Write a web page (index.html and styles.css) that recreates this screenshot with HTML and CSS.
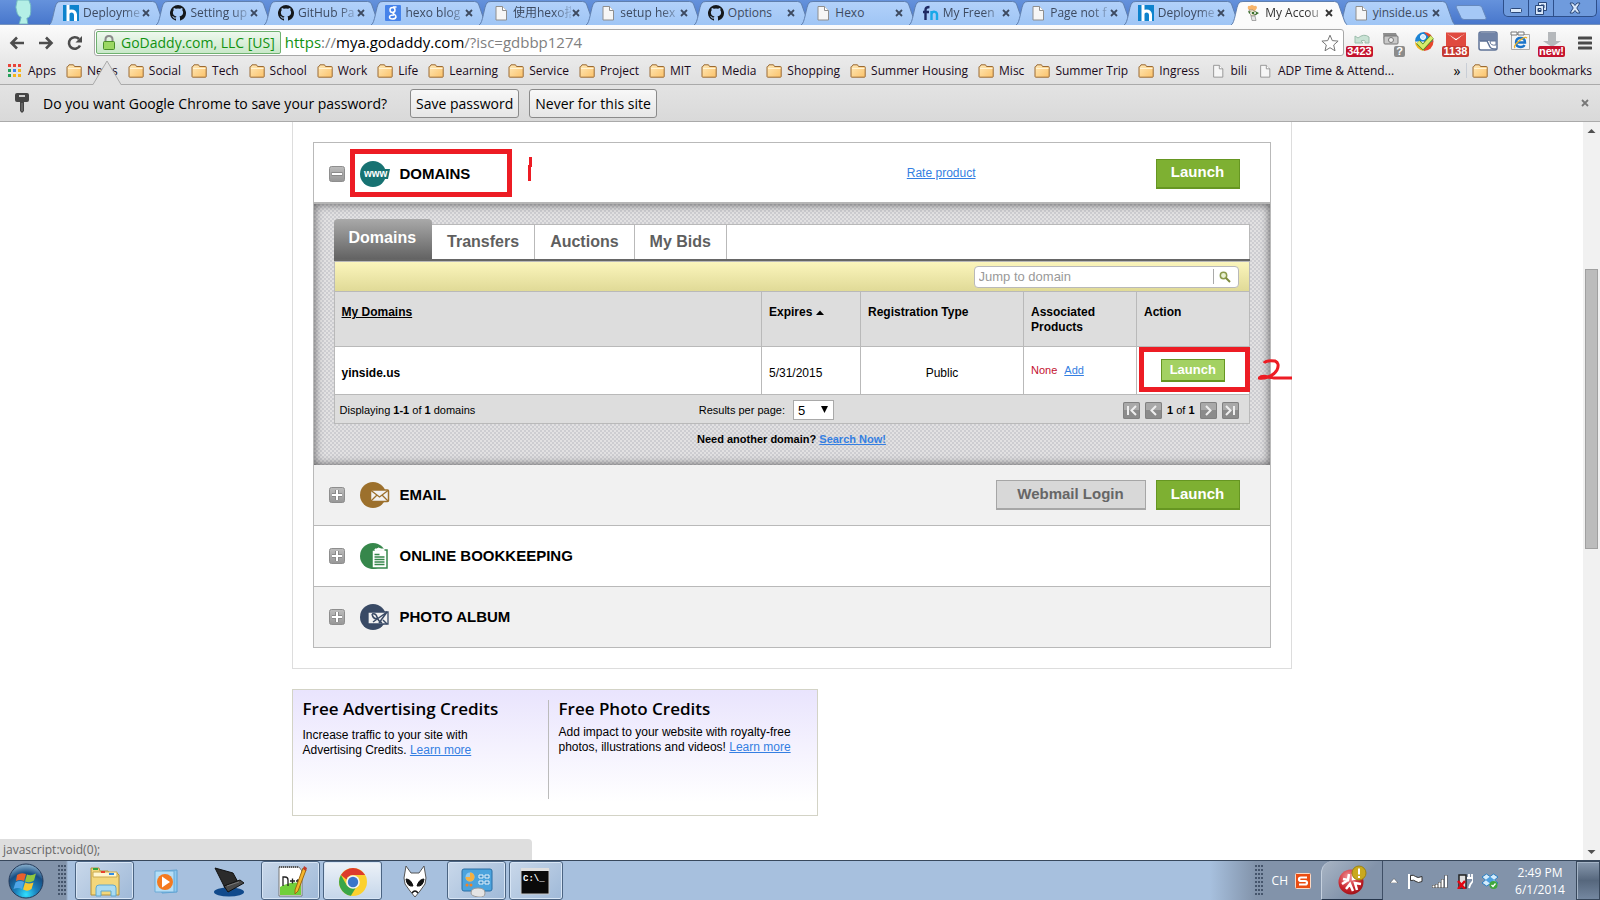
FILE: index.html
```html
<!DOCTYPE html>
<html lang="en">
<head>
<meta charset="utf-8">
<title>My Account</title>
<link rel="stylesheet" href="styles.css">
</head>
<body>
<svg class="defs" aria-hidden="true">
  <defs>
    <linearGradient id="gTab" x1="0" y1="0" x2="0" y2="1"><stop offset="0" stop-color="#b2d1fa"/><stop offset="1" stop-color="#9fc5f5"/></linearGradient>
    <linearGradient id="gFolder" x1="0" y1="0" x2="1" y2="1"><stop offset="0" stop-color="#ffe9b8"/><stop offset="1" stop-color="#fbc26a"/></linearGradient>
    <linearGradient id="gGrey" x1="0" y1="0" x2="0" y2="1"><stop offset="0" stop-color="#bdbdbd"/><stop offset="1" stop-color="#979797"/></linearGradient>
    <radialGradient id="gOrb" cx=".5" cy=".9" r=".9"><stop offset="0" stop-color="#2fe0ff"/><stop offset=".35" stop-color="#1c82bd"/><stop offset=".7" stop-color="#174e83"/><stop offset="1" stop-color="#8fb6d2"/></radialGradient>
    <radialGradient id="gRed" cx=".4" cy=".3" r=".8"><stop offset="0" stop-color="#f3959a"/><stop offset=".6" stop-color="#c9232b"/><stop offset="1" stop-color="#8f0d14"/></radialGradient>
  </defs>
  <symbol id="tab" viewBox="0 0 117 25" preserveAspectRatio="none"><path d="M0 25C4 24 5 6 8 3Q9 1.500 12 1.500H104Q107 1.500 108 4L114 21Q115 24 117 25" stroke="#5f7fae" vector-effect="non-scaling-stroke"/></symbol>
  <symbol id="close" viewBox="0 0 8 8"><path d="M1 1l6 6M7 1l-6 6" stroke="currentColor" stroke-width="1.800" fill="none"/></symbol>
  <symbol id="fav-h" viewBox="0 0 16 16"><path fill="#0e83cd" d="M0 0h16v16H0z"/><path d="M5 0v16M5 16V9q0-3 3.500-3T12.500 9.500V16" fill="none" stroke="#fff" stroke-width="3"/></symbol>
  <symbol id="fav-git" viewBox="0 0 16 16"><path fill="#15181b" d="M8 0a8 8 0 0 0-2.500 15.600c.4 0 .5-.2.500-.4v-1.600c-2.200.5-2.700-1-2.700-1-.4-.9-.9-1.200-.9-1.200-.7-.5.100-.5.100-.5.800.1 1.200.8 1.200.8.700 1.200 1.900.9 2.300.7.100-.5.300-.9.500-1.100-1.800-.2-3.600-.9-3.600-4 0-.8.300-1.500.8-2.100-.1-.3-.4-1.100.1-2.200 0 0 .7-.2 2.200.8a7.600 7.600 0 0 1 4 0c1.500-1 2.200-.8 2.200-.8.500 1.100.2 1.900.1 2.200.5.600.8 1.300.8 2.100 0 3.100-1.900 3.800-3.700 4 .3.300.6.800.6 1.600v2.300c0 .2.100.5.500.4A8 8 0 0 0 8 0z"/></symbol>
  <symbol id="fav-g" viewBox="0 0 16 16"><rect width="16" height="16" rx="1" fill="#4683ea"/><g fill="none" stroke="#fff" stroke-width="1.500"><ellipse cx="7.500" cy="5" rx="2.500" ry="2.500"/><path d="M11.500 2H8M9 7q-2 1 0 2.200T11 12q-.5 2-3.500 2t-3-2q0-2 4.500-2"/></g></symbol>
  <symbol id="fav-page" viewBox="0 0 16 16"><path d="M3 1.500h6.500L13.500 5.500V15H3z" fill="#f6f6f6" stroke="#8e8e8e"/><path d="M9.500 1.500v4h4" fill="#fff" stroke="#8e8e8e"/></symbol>
  <symbol id="fav-fn" viewBox="0 0 16 16"><path d="M2.500 15V5q0-3 4-3M0 7h6" stroke="#1f2a63" stroke-width="2.400" fill="none"/><path d="M8.500 15V6M8.500 9q1-3 3.500-2.200 2 .5 2 3V15" stroke="#18a8e8" stroke-width="2.400" fill="none"/></symbol>
  <symbol id="fav-gd" viewBox="0 0 16 16"><path d="M3 4Q2 0 5 1q2-2 4 0 3-1 3 2l-2 3H5z" fill="#f7b46a"/><path d="M4 5q4-1 7 2l-1 4H6z" fill="#f7ead0" stroke="#777" stroke-width=".6"/><path d="M3 6l4 1 4-.5 3 1.500-3 2-4-1-3-.5z" fill="#3d6e2f"/><circle cx="6" cy="8" r="1" fill="#fff"/><circle cx="10" cy="8" r="1" fill="#fff"/><path d="M6 11l4 0 1 4.500H7z" fill="#e6e6e6" stroke="#888" stroke-width=".7"/></symbol>
  <symbol id="folder" viewBox="0 0 16 14"><path d="M1 12.500V3q0-.5.500-.5H2L3 .8h4.500l1 1.700H14.500q.7 0 .7.700v9.300q0 .7-.7.700H1.700q-.7 0-.7-.7z" fill="url(#gFolder)" stroke="#9a6a35"/><path d="M2 4.500h12.500" stroke="#fff3d4"/></symbol>
  <symbol id="plus" viewBox="0 0 16 16"><rect x=".5" y=".5" width="15" height="15" rx="2" fill="url(#gGrey)" stroke="#8e8e8e"/><path d="M8 3v10M3 8h10" stroke="#8a8a8a" stroke-width="4"/><path d="M8 3v10M3 8h10" stroke="#fff" stroke-width="2"/></symbol>
</svg>

<header class="chrome">
  <div class="tabstrip">
    <svg class="avatar" viewBox="0 0 20 25"><path d="M3 0Q0 8 3 14q1 3 4 4l-2 7h9l-1-6q4-1 4-7 1-7-2-12z" fill="#b4efe6" stroke="#6fb7c0"/></svg>
    <nav class="tabs">
      <a class="tab" href="#"><svg class="shape"><use href="#tab"/></svg><svg class="fav"><use href="#fav-h"/></svg><span class="fade">Deployme</span><svg class="x"><use href="#close"/></svg></a>
      <a class="tab" href="#"><svg class="shape"><use href="#tab"/></svg><svg class="fav"><use href="#fav-git"/></svg><span class="fade">Setting up</span><svg class="x"><use href="#close"/></svg></a>
      <a class="tab" href="#"><svg class="shape"><use href="#tab"/></svg><svg class="fav"><use href="#fav-git"/></svg><span class="fade">GitHub Pa</span><svg class="x"><use href="#close"/></svg></a>
      <a class="tab" href="#"><svg class="shape"><use href="#tab"/></svg><svg class="fav"><use href="#fav-g"/></svg><span class="fade">hexo blog</span><svg class="x"><use href="#close"/></svg></a>
      <a class="tab" href="#"><svg class="shape"><use href="#tab"/></svg><svg class="fav"><use href="#fav-page"/></svg><span class="fade">使用hexo搭</span><svg class="x"><use href="#close"/></svg></a>
      <a class="tab" href="#"><svg class="shape"><use href="#tab"/></svg><svg class="fav"><use href="#fav-page"/></svg><span class="fade">setup hex</span><svg class="x"><use href="#close"/></svg></a>
      <a class="tab" href="#"><svg class="shape"><use href="#tab"/></svg><svg class="fav"><use href="#fav-git"/></svg><span>Options</span><svg class="x"><use href="#close"/></svg></a>
      <a class="tab" href="#"><svg class="shape"><use href="#tab"/></svg><svg class="fav"><use href="#fav-page"/></svg><span>Hexo</span><svg class="x"><use href="#close"/></svg></a>
      <a class="tab" href="#"><svg class="shape"><use href="#tab"/></svg><svg class="fav"><use href="#fav-fn"/></svg><span class="fade">My Freen</span><svg class="x"><use href="#close"/></svg></a>
      <a class="tab" href="#"><svg class="shape"><use href="#tab"/></svg><svg class="fav"><use href="#fav-page"/></svg><span class="fade">Page not f</span><svg class="x"><use href="#close"/></svg></a>
      <a class="tab" href="#"><svg class="shape"><use href="#tab"/></svg><svg class="fav"><use href="#fav-h"/></svg><span class="fade">Deployme</span><svg class="x"><use href="#close"/></svg></a>
      <a class="tab active" href="#"><svg class="shape"><use href="#tab"/></svg><svg class="fav"><use href="#fav-gd"/></svg><span class="fade">My Accou</span><svg class="x"><use href="#close"/></svg></a>
      <a class="tab" href="#"><svg class="shape"><use href="#tab"/></svg><svg class="fav"><use href="#fav-page"/></svg><span>yinside.us</span><svg class="x"><use href="#close"/></svg></a>
    </nav>
    <button class="newtab" aria-label="New tab"><svg viewBox="0 0 32 15"><path d="M1 2Q1 .5 3 .5H24q2 0 3 2l4 10q.5 2-1 2H9q-2 0-3-2z" fill="#a5c8f6" stroke="#6588bd"/></svg></button>
    <div class="winbtns">
      <button aria-label="Minimize"><svg viewBox="0 0 24 17"><rect x="6.500" y="8.500" width="11" height="4" rx="1" fill="#d9e8fa" stroke="#2b4879"/></svg></button>
      <button aria-label="Restore"><svg viewBox="0 0 24 17"><g fill="#d9e8fa" stroke="#2b4879" fill-rule="evenodd"><path d="M9.500 2.500h8v8h-8zM12 5v3h3V5z"/><path d="M6.500 5.500h8v9h-8zM9 8.500v3h3v-3z"/></g></svg></button>
      <button class="wx" aria-label="Close window"><svg viewBox="0 0 24 17"><path d="M7 3h3l2 2.500L14 3h3l-3.200 5L17 13h-3l-2-2.500L10 13H7l3.200-5z" fill="#d9e8fa" stroke="#2b4879"/></svg></button>
    </div>
  </div>

  <div class="toolbar">
    <button class="nav" aria-label="Back"><svg viewBox="0 0 16 16"><path d="M15 8H3M8 2.500L2.500 8 8 13.500" fill="none" stroke="#4d4d4d" stroke-width="2.600"/></svg></button>
    <button class="nav" aria-label="Forward"><svg viewBox="0 0 16 16"><path d="M1 8h12M8 2.500L13.500 8 8 13.500" fill="none" stroke="#4d4d4d" stroke-width="2.600"/></svg></button>
    <button class="nav" aria-label="Reload"><svg viewBox="0 0 16 16"><path d="M13 10.500A5.800 5.800 0 1 1 12 4" fill="none" stroke="#4d4d4d" stroke-width="2.600"/><path d="M15 1v6.500H8.500z" fill="#4d4d4d"/></svg></button>
    <div class="omnibox">
      <span class="cert"><svg viewBox="0 0 12 15"><path d="M2.500 7V4.500q0-3.500 3.500-3.500t3.500 3.500V7" fill="none" stroke="#8b8b8b" stroke-width="2"/><rect x=".5" y="6.500" width="11" height="8" rx="1" fill="#9bd863" stroke="#4a8f2a"/></svg>GoDaddy.com, LLC [US]</span>
      <span class="url"><i>https</i>://<b>mya.godaddy.com</b>/?isc=gdbbp1274</span>
      <svg class="star" viewBox="0 0 18 18"><path d="M9 1.200l2.300 5.400 5.800.5-4.400 3.900 1.300 5.800-5-3.100-5 3.100 1.300-5.800L.9 7.100l5.800-.5z" fill="#fff" stroke="#777"/></svg>
    </div>
    <div class="exts">
      <button aria-label="Extension 3423"><svg viewBox="0 0 28 24"><path d="M9 12V5l3 2q6-5 11-1v6h-4q1-4-4-2l2 2z" fill="#c8e2d4" stroke="#9bbcab"/></svg><em class="crimson">3423</em></button>
      <button aria-label="Extension"><svg viewBox="0 0 28 24"><path d="M5 2h13l2 5v5H6z" fill="#8d8d8d"/><rect x="6" y="5" width="14" height="8" rx="1" fill="#c9c9c9" stroke="#777"/><circle cx="13" cy="9" r="2.500" fill="#eee" stroke="#777"/></svg><em class="grey">?</em></button>
      <button aria-label="Extension"><svg viewBox="0 0 28 24"><path d="M14 1a9.500 9.500 0 0 1 0 19z" fill="#e8452c"/><path d="M14 1a9.500 9.500 0 0 0-9 9.500h18z" fill="#1d84d4"/><path d="M14 20a9.500 9.500 0 0 1-9-9.500z" fill="#f2b51d"/><circle cx="13" cy="6" r="2.500" fill="#cde8ff" stroke="#fff"/><path d="M8 11l5 5 9-10" fill="none" stroke="#4c8e26" stroke-width="5"/><path d="M8 11l5 5 9-10" fill="none" stroke="#d6ec6d" stroke-width="3.500"/></svg></button>
      <button aria-label="Mail 1138"><svg viewBox="0 0 28 24"><path d="M4 2h20v14H4z" fill="#e04a3f"/><path d="M4 2l10 8 10-8z" fill="#fff" stroke="#e04a3f"/><path d="M4 2l10 6 10-6z" fill="#e04a3f"/></svg><em class="brick">1138</em></button>
      <button aria-label="Extension"><svg viewBox="0 0 28 24"><rect x="5" y="1" width="18" height="18" rx="2" fill="#fff" stroke="#5f7397" stroke-width="1.500"/><path d="M5 2h18v8H5z" fill="#7083a6"/><path d="M6 10h7l3 6q1 2 6 2" fill="none" stroke="#5f7397" stroke-width="1.500"/><path d="M16 10q0 5 6 4v-4z" fill="#fff" stroke="#5f7397"/></svg></button>
      <button aria-label="IE Tab"><svg viewBox="0 0 28 24"><path d="M5.500 3.500h18v15h-18z" fill="#f4f4f4" stroke="#aaa"/><path d="M5 1h6v3H5zM12 1h6v3h-6z" fill="#fff" stroke="#777"/><path d="M10 11.500h9q0-4.500-4.500-4.500T10 11.500q0 4.500 4.500 4.500 3 0 4-2" fill="none" stroke="#1b74c9" stroke-width="2.400"/><path d="M9 17q-2-2 4-7t8-3" fill="none" stroke="#f0b323" stroke-width="1.300"/></svg></button>
      <button aria-label="Download new"><svg viewBox="0 0 28 24"><path d="M10 1h8v9h5l-9 6-9-6h5z" fill="#b5b8bb"/></svg><em class="crimson">new!</em></button>
      <button class="menu" aria-label="Menu"><svg viewBox="0 0 14 14"><path d="M1 2h12M1 7h12M1 12h12" stroke="#4a4a4a" stroke-width="3" stroke-linecap="round"/></svg></button>
    </div>
  </div>

  <nav class="bookmarks">
    <a href="#"><svg class="apps" viewBox="0 0 13 13"><path fill="#e8443a" d="M0 0h3v3H0zM5 0h3v3H5zM10 0h3v3h-3z"/><path fill="#25a05a" d="M0 5h3v3H0zM0 10h3v3H0z"/><path fill="#3f82f0" d="M5 5h3v3H5z"/><path fill="#f5b41c" d="M10 5h3v3h-3zM5 10h3v3H5zM10 10h3v3h-3z"/></svg>Apps</a>
    <a href="#"><svg><use href="#folder"/></svg>News</a>
    <a href="#"><svg><use href="#folder"/></svg>Social</a>
    <a href="#"><svg><use href="#folder"/></svg>Tech</a>
    <a href="#"><svg><use href="#folder"/></svg>School</a>
    <a href="#"><svg><use href="#folder"/></svg>Work</a>
    <a href="#"><svg><use href="#folder"/></svg>Life</a>
    <a href="#"><svg><use href="#folder"/></svg>Learning</a>
    <a href="#"><svg><use href="#folder"/></svg>Service</a>
    <a href="#"><svg><use href="#folder"/></svg>Project</a>
    <a href="#"><svg><use href="#folder"/></svg>MIT</a>
    <a href="#"><svg><use href="#folder"/></svg>Media</a>
    <a href="#"><svg><use href="#folder"/></svg>Shopping</a>
    <a href="#"><svg><use href="#folder"/></svg>Summer Housing</a>
    <a href="#"><svg><use href="#folder"/></svg>Misc</a>
    <a href="#"><svg><use href="#folder"/></svg>Summer Trip</a>
    <a href="#"><svg><use href="#folder"/></svg>Ingress</a>
    <a href="#"><svg><use href="#fav-page"/></svg>bili</a>
    <a href="#"><svg><use href="#fav-page"/></svg>ADP Time &amp; Attend...</a>
    <span class="more">»</span>
    <a class="other" href="#"><svg><use href="#folder"/></svg>Other bookmarks</a>
  </nav>

  <div class="infobar">
    <svg class="notch" viewBox="0 0 28 26"><path d="M0 24.500L14 1l14 23.500V26H0z" fill="#e2e2e2"/><path d="M0 24.500L14 1l14 23.500" fill="none" stroke="#aaa"/></svg>
    <svg class="key" viewBox="0 0 14 20"><path d="M2 0h10q2 0 2 2v5q0 2-2 2H9v9l-2 2-2-2V9H2Q0 9 0 7V2q0-2 2-2z" fill="#454545"/><path d="M4 3h6" stroke="#ccc" stroke-width="2"/><path d="M7 10v8" stroke="#888"/></svg>
    <span class="ask">Do you want Google Chrome to save your password?</span>
    <button class="ib">Save password</button>
    <button class="ib">Never for this site</button>
    <button class="ibx" aria-label="Dismiss"><svg><use href="#close"/></svg></button>
  </div>
</header>

<div class="viewport">
  <main class="page">
    <section class="account">
      <div class="products">
        <div class="row first">
          <svg class="toggle" viewBox="0 0 16 16"><rect x=".5" y=".5" width="15" height="15" rx="2" fill="url(#gGrey)" stroke="#8e8e8e"/><path d="M2.500 8h11" stroke="#8a8a8a" stroke-width="4"/><path d="M3 8h10" stroke="#fff" stroke-width="2"/></svg>
          <svg class="picon" viewBox="0 0 30 26"><circle cx="13" cy="13" r="13" fill="#177272"/><path d="M22 8l8 0-2 10h-6z" fill="#177272"/><text x="4" y="16" class="www">www</text></svg>
          <h2>DOMAINS</h2>
          <a class="rate" href="#">Rate product</a>
          <button class="btn green">Launch</button>
          <svg class="mark one" viewBox="0 0 6 25"><path d="M3.500 0v10M2.500 8v16" stroke="#ed1c24" stroke-width="3" fill="none"/></svg>
        </div>
        <div class="panel">
          <nav class="subtabs">
            <a class="on" href="#">Domains</a><a href="#">Transfers</a><a href="#">Auctions</a><a href="#">My Bids</a><span></span>
          </nav>
          <div class="grid">
            <div class="jump">
              <div class="search"><input type="text" aria-label="Jump to domain" placeholder="Jump to domain"><button aria-label="Search"><svg viewBox="0 0 12 12"><circle cx="4.500" cy="4.500" r="3.200" fill="#e9f1d2" stroke="#8b9a4b" stroke-width="1.500"/><path d="M7 7l4 4" stroke="#7d8a3c" stroke-width="2"/></svg></button></div>
            </div>
            <table>
              <colgroup><col><col class="c2"><col class="c3"><col class="c4"><col class="c5"></colgroup>
              <thead><tr><th><a href="#">My Domains</a></th><th>Expires <svg class="sort" viewBox="0 0 8 5"><path d="M0 5l4-4.500L8 5z"/></svg></th><th>Registration Type</th><th>Associated Products</th><th>Action</th></tr></thead>
              <tbody><tr><td><strong>yinside.us</strong></td><td>5/31/2015</td><td class="mid">Public</td><td class="assoc"><span>None</span><a href="#">Add</a></td><td class="act"><button class="btn small">Launch</button><svg class="mark two" viewBox="0 0 34 22"><path d="M6 4Q8 1 17 2q5 2 2 9-3 5-9 7-6 2-9 1 3-3 9-1l6 1h18" fill="none" stroke="#ed1c24" stroke-width="3"/></svg></td></tr></tbody>
            </table>
            <div class="foot">
              <span class="disp">Displaying <b>1-1</b> of <b>1</b> domains</span>
              <div class="rpp"><label for="rpp">Results per page:</label><span class="pick"><select id="rpp"><option>5</option></select><svg viewBox="0 0 7 7"><path d="M0 0h7L3.500 7z"/></svg></span></div>
              <span class="pager">
                <button aria-label="First"><svg viewBox="0 0 17 17"><path d="M5 4v9M13 4L8.500 8.500 13 13" fill="none" stroke="#eee" stroke-width="2"/></svg></button>
                <button aria-label="Previous"><svg viewBox="0 0 17 17"><path d="M11 4L6.500 8.500 11 13" fill="none" stroke="#eee" stroke-width="2"/></svg></button>
                <span><b>1</b> of <b>1</b></span>
                <button aria-label="Next"><svg viewBox="0 0 17 17"><path d="M6 4l4.500 4.500L6 13" fill="none" stroke="#eee" stroke-width="2"/></svg></button>
                <button aria-label="Last"><svg viewBox="0 0 17 17"><path d="M4 4l4.500 4.500L4 13M12 4v9" fill="none" stroke="#eee" stroke-width="2"/></svg></button>
              </span>
            </div>
          </div>
          <p class="need">Need another domain? <a href="#">Search Now!</a></p>
        </div>
        <div class="row alt">
          <svg class="toggle"><use href="#plus"/></svg>
          <svg class="picon" viewBox="0 0 30 26"><circle cx="13" cy="13" r="13" fill="#9c702c"/><rect x="10.500" y="8" width="18" height="11.500" rx="1" fill="#f1f1f1" stroke="#9c702c" stroke-width="1.500"/><path d="M11 8.500l8.500 6.500L28 8.500M11 19l6-6M28 19l-6-6" fill="none" stroke="#9c702c" stroke-width="1.300"/></svg>
          <h2>EMAIL</h2>
          <button class="btn webmail">Webmail Login</button>
          <button class="btn green">Launch</button>
        </div>
        <div class="row">
          <svg class="toggle"><use href="#plus"/></svg>
          <svg class="picon" viewBox="0 0 30 26"><circle cx="13" cy="13" r="13" fill="#36874b"/><path d="M12 7h15v18H12z" fill="#fff" stroke="#36874b" stroke-width="1.500"/><path d="M15 7.500V6h2q1-2 4 0h3v2z" fill="#fff" stroke="#fff"/><path d="M14.500 11.500h5M14.500 14h10M14.500 16.500h10M14.500 19h10M14.500 21.500h10" stroke="#36874b" stroke-width="1.300"/></svg>
          <h2>ONLINE BOOKKEEPING</h2>
        </div>
        <div class="row alt">
          <svg class="toggle"><use href="#plus"/></svg>
          <svg class="picon" viewBox="0 0 30 26"><circle cx="13" cy="13" r="13" fill="#394a65"/><path d="M8 8h20v12H8z" fill="#f1f1f1" stroke="#394a65" stroke-width="1.300"/><path d="M12 10q4-1 5 3t5 6M27 8l-14 10M19 19l8-11M12 10q1 5 5 5M23 16l4 4" fill="none" stroke="#394a65" stroke-width="1.500"/></svg>
          <h2>PHOTO ALBUM</h2>
        </div>
      </div>
    </section>
    <section class="credits">
      <div class="credit">
        <h3>Free Advertising Credits</h3>
        <p>Increase traffic to your site with<br>Advertising Credits. <a href="#">Learn more</a></p>
      </div>
      <div class="credit photo">
        <h3>Free Photo Credits</h3>
        <p>Add impact to your website with royalty-free<br>photos, illustrations and videos! <a href="#">Learn more</a></p>
      </div>
    </section>
  </main>
  <div class="scroll">
    <svg viewBox="0 0 17 17"><path d="M4.500 11L8.500 7l4 4z" fill="#505050"/></svg>
    <div class="track"><div class="thumb"></div></div>
    <svg viewBox="0 0 17 17"><path d="M4.500 7l4 4 4-4z" fill="#505050"/></svg>
  </div>
  <div class="status">javascript:void(0);</div>
</div>

<footer class="taskbar">
  <button class="orb" aria-label="Start"><svg viewBox="0 0 36 38"><circle cx="18" cy="19" r="17" fill="url(#gOrb)" stroke="#243a5a"/><path d="M9 13q4-3 9-1l-2 7q-4-2-8 0z" fill="#e8602c"/><path d="M19 12.500q4 2 9-1l-2 7q-4 3-9 1z" fill="#8fc640"/><path d="M7.500 20.500q4-2.500 8.500-.5l-2 7q-4-2-8.500 0z" fill="#4fa5e8"/><path d="M17 20.500q4 2 8.500 0l-2 6.500q-4 3-8.500.5z" fill="#f7c731"/></svg></button>
  <i class="grip"></i>
  <div class="apps-row">
    <button class="task open" aria-label="Explorer"><svg viewBox="0 0 32 32"><path d="M2 3h8l1 3h8l1 2h8l2 2v20H2z" fill="#f3d77c" stroke="#b4923a"/><path d="M4 7h24v5H4z" fill="#fff6cf" stroke="#c9a94e"/><path d="M4 3h5v2H4z" fill="#2fa33a"/><path d="M12 6h4v2h-4z" fill="#e8402c"/><path d="M20 8h5v2h-5z" fill="#2f8ce8"/><path d="M7 31v-8q0-3 3-3h14q3 0 3 3v8h-5v-5H12v5z" fill="#a9dbf3" stroke="#5ea7cf"/></svg></button>
    <button class="task" aria-label="Media Player"><svg viewBox="0 0 32 32"><path d="M11 6l15-1v22l-15 1z" fill="#8fc9ef" stroke="#5a9fd0"/><path d="M4 6h19v21H4z" fill="#b5def6" stroke="#6aaad6"/><circle cx="14" cy="17" r="8" fill="#f47a1f"/><path d="M11 11.500l8 5.500-8 5.500z" fill="#fff"/></svg></button>
    <button class="task" aria-label="Laptop"><svg viewBox="0 0 32 32"><ellipse cx="16" cy="27" rx="15" ry="4.500" fill="#114a8c"/><path d="M2 3l18 5 6 11-14 4z" fill="#2b2b2b" stroke="#111"/><path d="M11 21l16-6 4 3-16 9z" fill="#484848" stroke="#111"/><path d="M14 21l12-4" stroke="#777"/></svg></button>
    <button class="task open" aria-label="Notepad++"><svg viewBox="0 0 32 32"><path d="M4 2h20l3 4v25H4z" fill="#fff" stroke="#777"/><path d="M5 22q10-6 21-4v12H5z" fill="#71cf3b"/><path d="M4 2h20" stroke="#555" stroke-width="2" stroke-dasharray="1 1"/><path d="M8 21v-9h2q3 0 3 3v6M15 16h5M17.500 13.500v5M21 16h4M23 14v4" stroke="#222" fill="none" stroke-width="1.300"/><path d="M28 3l3 2-8 21-3 3v-4z" fill="#f5b52b" stroke="#9c6a10"/><path d="M29 1l3 2-1 3-3-2z" fill="#c0392b"/></svg></button>
    <button class="task open chromeapp" aria-label="Chrome"><svg viewBox="0 0 32 32"><circle cx="16" cy="17" r="14" fill="#fbd12f"/><path d="M3.900 10A14 14 0 0 1 28.100 10H16a7 7 0 0 0-6.500 4.500z" fill="#dd3b2c"/><path d="M3.900 10a14 14 0 0 0 10 20.800l5.500-9a7 7 0 0 1-9.500-1.300z" fill="#3aa648"/><circle cx="16" cy="17" r="6.800" fill="#f4f4f4"/><circle cx="16" cy="17" r="5.200" fill="#3a75c9"/></svg></button>
    <button class="task" aria-label="foobar"><svg viewBox="0 0 32 32"><path d="M7 1l5 7h8l5-7 2 12-1 6-5 7-5 6-5-6-5-7-1-6z" fill="#fff" stroke="#555"/><path d="M7 14q5 0 7 7-6 1-7-7zM25 14q-5 0-7 7 6 1 7-7z" fill="#111" stroke="#111"/><path d="M13 28q3-4 6 0" stroke="#111" fill="none" stroke-width="1.500"/></svg></button>
    <button class="task open" aria-label="Control panel"><svg viewBox="0 0 32 32"><rect x="1" y="4" width="30" height="22" rx="2" fill="#4ba3dd" stroke="#2a6fa6"/><circle cx="9" cy="12" r="4.500" fill="#8cc8ef"/><path d="M9 12V7.500a4.500 4.500 0 1 1-4.500 4.500z" fill="#f5b041"/><path d="M18 10h4v3h-4zM24 10h4v3h-4zM18 16h4v3h-4zM24 16h4v3h-4z" fill="#3889c4" stroke="#e8f4fc"/><circle cx="6" cy="20" r="1.500" fill="#f58220"/><circle cx="10" cy="20" r="1.500" fill="#f58220"/><path d="M10 28q0-5 7-5t7 5-7 4-7-4z" fill="#e4e4e4" stroke="#999"/></svg></button>
    <button class="task open cmd" aria-label="Command prompt"><svg viewBox="0 0 32 32"><path d="M2 4h28v25H2z" fill="#0a0a0a" stroke="#c9c9c9"/><path d="M2 3h28v3H2z" fill="#dedede"/><text x="4" y="16" class="cmdtxt">C:\_</text></svg></button>
  </div>
  <div class="tray">
    <i class="grip"></i>
    <span class="ch">CH</span>
    <svg class="sogou" viewBox="0 0 16 16"><rect x=".5" y=".5" width="15" height="15" rx="1" fill="#ea4d12" stroke="#fbd9c5"/><path d="M12 4.500H6q-2 0-2 1.700T6 8h4q2 0 2 1.800t-2 1.700H4" fill="none" stroke="#fff" stroke-width="2.200"/></svg>
    <div class="avast"><svg viewBox="0 0 30 30"><circle cx="14" cy="17" r="12.500" fill="url(#gRed)"/><path d="M6 14l5 1 1-6M11 15l-6 4M9 24l4-5 3 7M16 9l0 5 6-1M24 19l-6-1 2 7" stroke="#fff" stroke-width="2.500" fill="none"/><circle cx="22" cy="8" r="7" fill="#c9a91c" stroke="#9d8210"/><path d="M22 3.500v6M22 11v2" stroke="#fff" stroke-width="2"/></svg></div>
    <div class="icons">
      <svg viewBox="0 0 8 5"><path d="M0 5l4-4.500L8 5z" fill="#fff" stroke="#444" stroke-width=".5"/></svg>
      <svg class="i16" viewBox="0 0 16 16"><path d="M2 1v15" stroke="#fff" stroke-width="2"/><path d="M3.500 2.500q3-1 5 1t6.500 0v5q-4 2-6 0t-5.500-1z" fill="#fff" stroke="#333"/></svg>
      <svg class="i16" viewBox="0 0 16 16"><path d="M1.500 15v-3M4.500 15v-4M7.500 15V9M10.500 15V6M14 15V2" stroke="#444" stroke-width="3"/><path d="M1.500 14.500v-2M4.500 14.500v-3M7.500 14.500V9.500M10.500 14.500v-8M14 14.500v-12" stroke="#fff" stroke-width="2"/></svg>
      <svg class="i16" viewBox="0 0 16 16"><path d="M2 2h7v13H2z" fill="#ddd" stroke="#222" stroke-width="1.500"/><path d="M12 1v3M15 1v3M10 5h6v3q-3 3-4 7" stroke="#fff" stroke-width="1.800" fill="none"/><path d="M1 8l7 8M8 8l-7 8" stroke="#e30613" stroke-width="2.500"/></svg>
      <svg class="i16" viewBox="0 0 16 16"><path d="M4.500 1L8 3.500 11.500 1 16 4l-3.500 3L16 10l-4.500 3L8 11l-3.500 2L0 10l3.500-3L0 4z" fill="#d4ebfb" stroke="#2b7fc4"/><path d="M8 3.500L12.500 7 8 10.500 3.500 7z" fill="#4b9fe0"/><circle cx="11.500" cy="12" r="4" fill="#3fa63a"/><path d="M9.500 12l1.500 1.500 2.500-3" stroke="#fff" fill="none" stroke-width="1.300"/></svg>
    </div>
    <div class="clock"><span>2:49 PM</span><span>6/1/2014</span></div>
    <button class="desk" aria-label="Show desktop"></button>
  </div>
</footer>
</body>
</html>
```
FILE: styles.css
```css
*, *::before { box-sizing: border-box; }
html, body { height: 100%; }
body {
  margin: 0;
  display: flex;
  flex-direction: column;
  overflow: hidden;
  background: #fff;
  color: #000;
  font: 12px/15px "Liberation Sans", Arial, sans-serif;
}
button { font: inherit; padding: 0; border: 0; background: none; }
svg { display: block; flex: none; }
a { color: #347fe2; }
h2, h3, p { margin: 0; }
.defs { position: absolute; width: 0; height: 0; }

/* browser frame */
.chrome { flex: none; font-family: "Open Sans", "Noto Sans CJK SC", sans-serif; }
.tabstrip {
  display: flex;
  height: 25px;
  padding-left: 14px;
  background: linear-gradient(#6592dc, #4877cc);
  border-bottom: 1px solid #7592bd;
}
.avatar { width: 20px; height: 24px; margin-right: 15px; }
.tabs { flex: 1; display: flex; min-width: 0; }
.tab {
  position: relative;
  flex: 1;
  min-width: 0;
  display: flex;
  align-items: center;
  height: 25px;
  padding: 0 0 0 14px;
  color: #3d4a60;
  text-decoration: none;
  fill: url(#gTab);
}
.tab.active { fill: #fbfbfb; color: #333; z-index: 2; }
.shape { position: absolute; left: 0; top: 0; width: calc(100% + 9px); height: 25px; }
.fav { position: relative; width: 16px; height: 16px; margin-right: 4px; }
.tab span {
  position: relative;
  flex: 1;
  min-width: 0;
  white-space: nowrap;
  font-size: 12px;
}
.tab .fade { overflow: hidden; mask-image: linear-gradient(to right, #000 70%, rgba(0, 0, 0, .2)); }
.tab .x { position: relative; width: 8px; height: 8px; margin: 0 6px 0 1px; fill: none; }
.newtab { width: 32px; height: 15px; margin: 5px 16px 0 9px; }
.winbtns {
  display: flex;
  height: 17px;
  margin-right: 3px;
  border: 1px solid #2d4f8b;
  border-top: 0;
  border-radius: 0 0 5px 5px;
  background: #6f9bdd;
}
.winbtns button { width: 25px; border-right: 1px solid #2d4f8b; }
.winbtns svg { width: 24px; height: 17px; }
.winbtns .wx { width: 42px; border: 0; padding-left: 9px; }

.toolbar {
  display: flex;
  align-items: center;
  height: 35px;
  padding: 0 8px 0 9px;
  gap: 13px;
  background: linear-gradient(#fbfbfb, #e9e9e9);
}
.nav svg { width: 16px; height: 16px; }
.omnibox {
  flex: 1;
  display: flex;
  align-items: center;
  height: 27px;
  margin-left: -2px;
  padding: 1px;
  border: 1px solid #a8a8a8;
  border-radius: 3px;
  background: #fff;
}
.cert {
  display: flex;
  align-items: center;
  gap: 6px;
  height: 23px;
  padding: 0 5px 0 6px;
  border: 1px solid #6fb170;
  border-radius: 2px;
  background: linear-gradient(#eef8ee, #c9e8c9);
  color: #129212;
  font-size: 14px;
}
.cert svg { width: 12px; height: 15px; }
.url { flex: 1; margin-left: 4px; color: #808080; font-size: 15px; }
.url i { font-style: normal; color: #129212; }
.url b { font-weight: 400; color: #000; }
.star { width: 18px; height: 18px; margin-right: 3px; }
.exts { display: flex; align-items: center; gap: 4px; margin-left: -11px; }
.exts button { position: relative; width: 28px; height: 24px; }
.exts svg { width: 28px; height: 24px; }
.exts .menu, .exts .menu svg { width: 14px; height: 14px; }
.exts .menu { margin-left: 8px; }
.exts em {
  position: absolute;
  right: 1px;
  bottom: -2px;
  min-width: 27px;
  height: 11px;
  border-radius: 2px;
  color: #fff;
  font: bold 11px/11px "Liberation Sans", Arial, sans-serif;
  text-align: center;
}
.exts .grey { min-width: 11px; background: #8b8b8b; }
.crimson { background: #c4122d; }
.brick { background: #c63a31; }

.bookmarks {
  display: flex;
  align-items: center;
  gap: 10px;
  height: 24px;
  padding: 0 8px 3px;
  background: linear-gradient(#e9e9e9, #e0e0e0);
  white-space: nowrap;
}
.bookmarks a { display: flex; align-items: center; gap: 5px; color: #1a0a1a; text-decoration: none; font-size: 12px; }
.bookmarks svg { width: 16px; height: 14px; }
.bookmarks .apps { width: 13px; height: 13px; margin-right: 2px; }
.more { margin-left: auto; font-size: 14px; }
.bookmarks .other { margin-left: -4px; padding-left: 5px; border-left: 1px solid #c9ced6; }

.infobar {
  position: relative;
  display: flex;
  align-items: center;
  height: 38px;
  padding: 0 11px 0 15px;
  border: 1px solid #aaa;
  border-width: 1px 0;
  background: linear-gradient(#e3e3e3, #d9d9d9);
}
.notch { position: absolute; left: 93px; top: -25px; width: 28px; height: 26px; }
.key { width: 14px; height: 20px; margin-right: 14px; }
.ask { margin-right: 23px; font-size: 14px; }
.ib {
  height: 29px;
  margin-right: 10px;
  padding: 0 5px;
  border: 1px solid #8a8a8a;
  border-radius: 3px;
  background: linear-gradient(#f8f8f8, #e6e6e6);
  font-size: 14px;
}
.ibx { margin-left: auto; color: #777; }
.ibx svg { width: 8px; height: 8px; }

/* page */
.viewport { position: relative; flex: 1; min-height: 0; display: flex; overflow: hidden; }
.page { flex: 1; min-width: 0; }
.account {
  max-width: 1000px;
  margin: 0 auto;
  padding: 20px;
  border: 1px solid #ddd;
  border-top: 0;
}
.products { border: 1px solid #b9b9b9; }
.row {
  position: relative;
  display: flex;
  align-items: center;
  gap: 10px;
  height: 61px;
  padding: 0 30px 0 15px;
  border-top: 1px solid #b9b9b9;
}
.row.first { height: 59px; padding-top: 2px; border-top: 0; }
.panel + .row { border-top: 0; height: 60px; }
.row.alt { background: #f1f1f1; }
.toggle { width: 16px; height: 16px; margin-right: 5px; }
.picon { width: 30px; height: 26px; }
.www { font: bold 10px "Liberation Sans", Arial, sans-serif; fill: #fff; }
.row h2 { flex: 1; font-size: 15px; line-height: 18px; }
.row.first::before {
  content: "";
  position: absolute;
  left: 36px;
  top: 6px;
  width: 162px;
  height: 48px;
  border: 5px solid #ed1c24;
}
.rate { margin-right: 170px; }
.btn {
  height: 30px;
  padding: 0 12px 3px;
  border: 1px solid #669622;
  border-bottom-width: 2px;
  color: #fff;
  font-weight: 700;
  font-size: 15px;
}
.green { width: 84px; background: #7eb032; }
.webmail { width: 150px; background: #d8d8d8; border-color: #a6a6a6; color: #666; }
.small { width: 64px; height: 23px; padding: 0 0 2px; background: #a3d162; font-size: 13px; }
.mark { position: absolute; }
.one { left: 213px; top: 14px; width: 6px; height: 25px; }

.panel {
  padding: 15px 20px 18px;
  border-top: 2px solid #b5b5b5;
  background: radial-gradient(circle at 1px 1px, #cdcdd1 1px, transparent 1px) 0 0 / 4px 4px, radial-gradient(circle at 1px 1px, #cdcdd1 1px, transparent 1px) 2px 2px / 4px 4px, #e2e1e2;
  box-shadow: inset 0 0 10px rgba(0, 0, 0, .6);
}
.subtabs { display: flex; align-items: flex-end; border-bottom: 2px solid #666; font-size: 16px; font-weight: 700; line-height: 34px; }
.subtabs a { height: 35px; padding: 0 15px; border-top: 1px solid #b9b9b9; border-right: 1px solid #b9b9b9; background: #fff; color: #5f5f5f; text-decoration: none; }
.subtabs a.on { height: 40px; padding-right: 16px; border: 0; border-radius: 4px 4px 0 0; background: linear-gradient(#a9a9a9, #636363); color: #fff; line-height: 38px; }
.subtabs span { flex: 1; height: 35px; border-top: 1px solid #b9b9b9; border-right: 1px solid #b9b9b9; background: #fff; }
.grid { border: 1px solid #b9b9b9; background: #ddd; }
.jump { display: flex; justify-content: flex-end; align-items: center; height: 29px; padding-right: 10px; background: linear-gradient(#fbf5bc, #e0da97); }
.search { display: flex; align-items: center; width: 265px; height: 22px; padding: 0 7px 0 4px; border: 1px solid #b9b9b9; border-radius: 4px; background: #fff; }
.search input { flex: 1; min-width: 0; height: 15px; padding: 0; border: 0; border-right: 1px solid #aaa; outline: 0; font: 13px/15px "Liberation Sans", Arial, sans-serif; }
.search input::placeholder { color: #999; }
.search button { margin-left: 5px; }
.search svg { width: 12px; height: 12px; }
table { width: 100%; border-collapse: collapse; table-layout: fixed; }
.c2 { width: 99px; }
.c3 { width: 163px; }
.c4 { width: 113px; }
.c5 { width: 112px; }
th, td { padding: 0 7px; border: 1px solid #b9b9b9; border-width: 1px 0 1px 1px; text-align: left; }
th:first-child, td:first-child { border-left: 0; }
th { height: 55px; padding-top: 13px; vertical-align: top; }
th a { color: #000; }
.sort { display: inline-block; width: 8px; height: 5px; vertical-align: 1px; }
td { height: 48px; padding-top: 5px; background: #fff; }
td.mid { text-align: center; }
td.assoc { padding-top: 0; font-size: 11px; }
.assoc span { margin-right: 7px; color: #c3122f; }
td.act { position: relative; padding: 0; text-align: center; }
.act::before { content: ""; position: absolute; left: 2px; top: 0; right: -1px; height: 45px; border: 5px solid #ed1c24; }
.small { position: relative; }
.two { left: 121px; top: 12px; width: 34px; height: 22px; }
.foot { display: flex; align-items: center; height: 28px; padding: 2px 10px 0 5px; font-size: 11px; }
.disp { flex: 1; }
.rpp { display: flex; align-items: center; gap: 8px; margin-right: 289px; }
.pick { position: relative; }
.pick select { display: block; appearance: none; width: 41px; height: 20px; padding: 0 0 0 4px; border: 1px solid #a9a9a9; border-radius: 0; background: #fff; font: 13px "Liberation Sans", Arial, sans-serif; }
.pick svg { position: absolute; right: 6px; top: 6px; width: 7px; height: 7px; }
.pager { display: flex; align-items: center; gap: 5px; }
.pager button { width: 17px; height: 17px; border-radius: 2px; background: linear-gradient(#a9a9a9 50%, #8b8b8b 50%); box-shadow: inset 0 0 0 1px #808080; }
.need { margin-top: 8px; text-align: center; font-size: 11px; font-weight: 700; }

.credits {
  width: 1000px;
  max-width: 100%;
  margin: 20px auto 0;
  display: grid;
  grid-template-columns: 256px 270px;
}
.credit { height: 127px; padding: 10px; border: 1px solid #d3d3c6; border-right: 0; background: linear-gradient(#e9e4fd, #fff 90%); }
.credit.photo { position: relative; padding-left: 11px; padding-right: 0; border-left: 0; border-right: 1px solid #d3d3c6; }
.credit.photo::before { content: ""; position: absolute; left: 0; top: 10px; bottom: 16px; border-left: 1px solid #bbb; }
.credit h3 { font: 600 17px/18px "Trebuchet MS", "Open Sans", sans-serif; }
.credit p { margin-top: 10px; white-space: nowrap; }
.credit.photo p { margin-top: 7px; }

.scroll { display: flex; flex-direction: column; width: 17px; background: #f1f1f1; }
.scroll svg { width: 17px; height: 17px; }
.track { flex: 1; padding: 130px 2px 0; }
.thumb { height: 280px; border: 1px solid #a0a0a0; background: #bcbcbc; }
.status {
  position: absolute;
  left: 0;
  bottom: 0;
  width: 532px;
  height: 21px;
  padding-left: 3px;
  border-radius: 0 4px 0 0;
  background: #dedede;
  color: #666;
  font: 12px/21px "Open Sans", sans-serif;
}

/* taskbar */
.taskbar {
  flex: none;
  display: flex;
  height: 40px;
  border-top: 1px solid #38485c;
  background: linear-gradient(to right, #8293aa 66px, #a7c0de 68px, #a7c0de 1210px, #8293aa 1256px);
  font-family: "Open Sans", sans-serif;
}
.orb { width: 36px; margin: 0 14px 0 8px; }
.orb svg { width: 36px; height: 38px; }
.grip { width: 9px; height: 31px; align-self: center; background: radial-gradient(circle at 1px 1px, #45556c 1px, transparent 1px) 0 0 / 3px 4px; }
.apps-row { display: flex; flex: 1; gap: 3px; margin-left: 8px; }
.task { display: flex; align-items: center; justify-content: center; width: 59px; height: 39px; }
.task svg { width: 32px; height: 32px; }
.open { border: 1px solid #4b6482; border-radius: 3px; background: linear-gradient(135deg, #c9d8ea, #9fb9d8); box-shadow: inset 0 0 0 1px #d7e5f5; }
.chromeapp { background: linear-gradient(#edf2f8, #c5d6ea); }
.cmd { width: 54px; padding-right: 3px; }
.cmdtxt { font: bold 9px "Liberation Mono", monospace; fill: #fff; }
.tray { display: flex; align-items: center; color: #fff; }
.ch { margin: 0 7px 0 8px; font-size: 12px; }
.sogou { width: 16px; height: 16px; margin-right: 10px; }
.avast { display: flex; align-items: center; justify-content: center; width: 62px; height: 39px; border-left: 1px solid #c5d0de; border-right: 1px solid #3f4f66; border-bottom: 1px solid #26364c; border-radius: 12px 0 0 0; background: linear-gradient(135deg, #a9b5c5, #8293aa 60%); }
.avast svg { width: 30px; height: 30px; }
.icons { display: flex; align-items: center; gap: 9px; margin: 0 17px 0 7px; }
.icons svg { width: 8px; height: 5px; }
.icons .i16 { width: 16px; height: 16px; }
.clock { display: flex; flex-direction: column; width: 50px; align-items: center; margin-right: 11px; font-size: 12px; line-height: 17px; white-space: nowrap; }
.desk { width: 24px; height: 39px; border: 1px solid #38485c; background: linear-gradient(#8899ae, #56677d 50%, #7487a0); box-shadow: inset 1px 1px 0 #a5b4c6; }
```
